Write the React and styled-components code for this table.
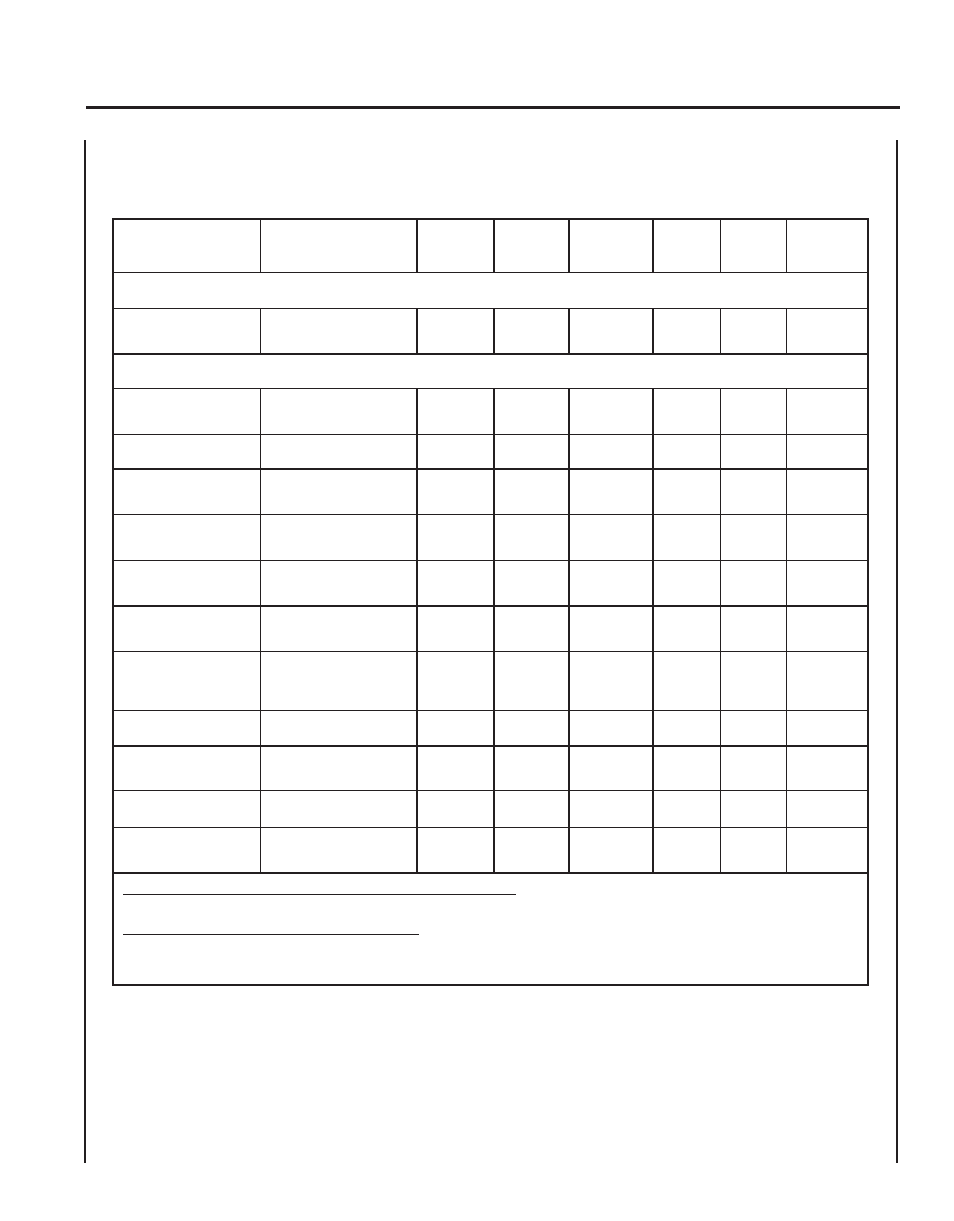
import styled, { createGlobalStyle } from 'styled-components'

const ink = '#231f20'

const GlobalStyle = createGlobalStyle`
  html, body {
    margin: 0;
    padding: 0;
    background: #ffffff;
    font-family: "Liberation Sans", Arial, sans-serif;
  }
  *, *::before, *::after {
    box-sizing: border-box;
  }
`

const Page = styled.div`
  width: 954px;
  min-height: 1221px;
  padding-top: 106px;
  background: #ffffff;
`

const HeaderRule = styled.div`
  margin-left: 86px;
  width: 814px;
  height: 3px;
  background: ${ink};
`

const Frame = styled.section`
  margin-top: 31px;
  margin-left: 84px;
  width: 814px;
  height: 1023px;
  border-left: 2px solid ${ink};
  border-right: 2px solid ${ink};
  padding: 78px 0 0 26px;
`

const Grid = styled.div`
  display: grid;
  grid-template-columns: 147px 157px 77px 75px 84px 67px 66px 82px;
  width: 757px;
  border-top: 2px solid ${ink};
  border-left: 2px solid ${ink};
`

const Cell = styled.div`
  height: ${({ $h }) => $h}px;
  border-bottom: ${({ $thick }) => ($thick ? 2 : 1)}px solid ${ink};
  border-right: ${({ $heavy }) => ($heavy ? 2 : 1)}px solid ${ink};
`

const SpanCell = styled(Cell)`
  grid-column: 1 / -1;
  border-right-width: 2px;
`

const Footer = styled.div`
  grid-column: 1 / -1;
  height: 112px;
  border-bottom: 2px solid ${ink};
  border-right: 2px solid ${ink};
  padding: 20px 0 0 9px;
  display: flex;
  flex-direction: column;
  gap: 39px;
`

const Blank = styled.div`
  width: ${({ $w }) => $w}px;
  height: 1px;
  background: ${ink};
`

// which column rules are drawn heavy (right border of each column)
const heavyCols = [false, true, true, true, true, false, false, true]

const rows = [
  { h: 53 },
  { h: 36, span: true },
  { h: 46, thick: true },
  { h: 34, span: true },
  { h: 46 },
  { h: 35, thick: true },
  { h: 45 },
  { h: 46 },
  { h: 46, thick: true },
  { h: 45 },
  { h: 59 },
  { h: 36, thick: true },
  { h: 44 },
  { h: 37 },
  { h: 46, thick: true },
]

const App = () => (
  <Page>
    <GlobalStyle />
    <HeaderRule />
    <Frame>
      <Grid>
        {rows.map((row, r) =>
          row.span ? (
            <SpanCell key={r} $h={row.h} $thick={row.thick} />
          ) : (
            heavyCols.map((heavy, c) => (
              <Cell key={`${r}-${c}`} $h={row.h} $thick={row.thick} $heavy={heavy} />
            ))
          )
        )}
        <Footer>
          <Blank $w={393} />
          <Blank $w={296} />
        </Footer>
      </Grid>
    </Frame>
  </Page>
)

export default App
